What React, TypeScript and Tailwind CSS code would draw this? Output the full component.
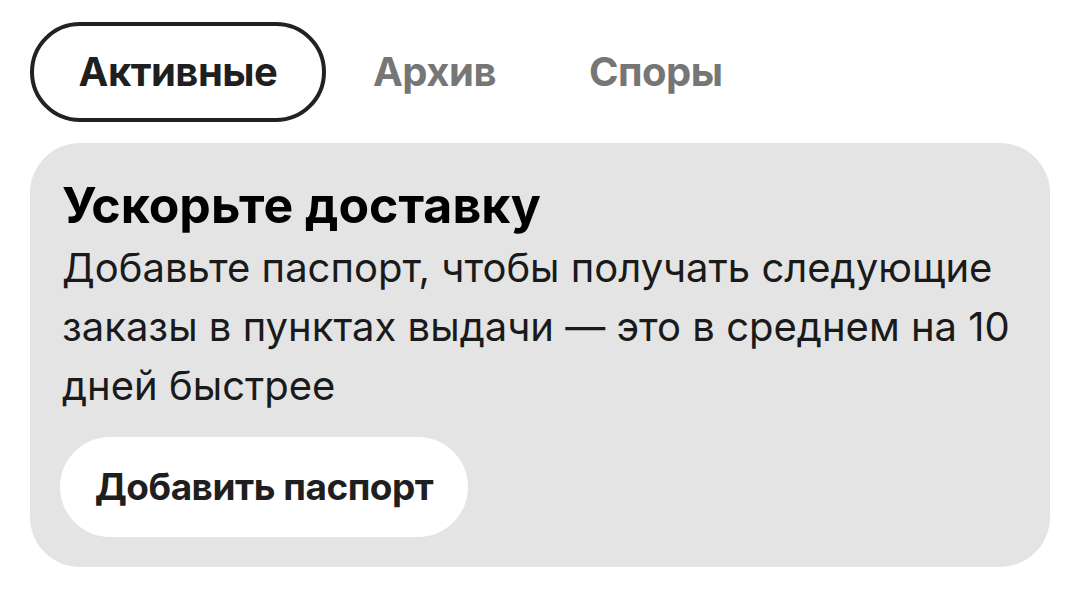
export default function App() {
  return (
    <div className="w-[1079px] h-[600px] bg-white" style={{ fontFamily: 'Inter, "Noto Sans", sans-serif' }}>
      <div className="flex items-center pt-[22px] pl-[30px]">
        <div className="h-[100px] w-[296px] rounded-full border-[4px] border-[#222] flex items-center justify-center text-[40px] font-bold text-[#1f1f1f] tracking-[-0.5px]">
          Активные
        </div>
        <div className="ml-[47px] text-[40px] font-bold text-[#767676] tracking-[-0.5px]">Архив</div>
        <div className="ml-[93px] text-[40px] font-bold text-[#767676] tracking-[-0.5px]">Споры</div>
      </div>
      <div className="mt-[21px] ml-[30px] w-[1020px] h-[424px] rounded-[50px] bg-[#e4e4e4] pt-[34px] px-[32px]">
        <div className="text-[50px] font-bold text-black leading-[56px]">Ускорьте доставку</div>
        <div className="text-[40px] text-[#1a1a1a] leading-[59px] mt-[5px]">
          Добавьте паспорт, чтобы получать следующие заказы в пунктах выдачи — это в среднем на 10 дней быстрее
        </div>
        <div className="mt-[22px] h-[100px] w-[408px] -ml-[2px] rounded-full bg-white flex items-center justify-center text-[37px] font-bold text-[#1f1f1f] tracking-[-0.5px]">
          Добавить паспорт
        </div>
      </div>
    </div>
  );
}
